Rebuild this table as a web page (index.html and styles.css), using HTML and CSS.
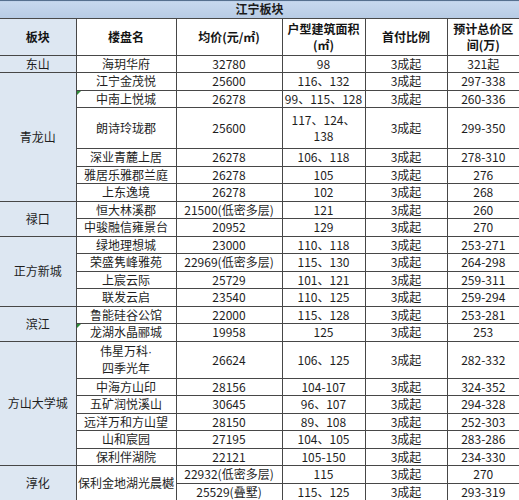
FILE: index.html
```html
<!DOCTYPE html>
<html lang="zh-CN">
<head>
<meta charset="utf-8">
<title>江宁板块</title>
<link rel="stylesheet" href="styles.css">
</head>
<body>
<table class="sheet">
  <colgroup>
    <col class="c1"><col class="c2"><col class="c3"><col class="c4"><col class="c5"><col class="c6">
  </colgroup>
  <thead>
    <tr class="r-title"><th class="title" colspan="6">江宁板块</th></tr>
    <tr class="r-head">
      <th class="blk">板块</th>
      <th>楼盘名</th>
      <th>均价(元/㎡)</th>
      <th>户型建筑面积<br>(㎡)</th>
      <th>首付比例</th>
      <th>预计总价区<br>间(万)</th>
    </tr>
  </thead>
  <tbody>
    <tr class="r"><td class="blk">东山</td><td>海玥华府</td><td>32780</td><td>98</td><td>3成起</td><td>321起</td></tr>

    <tr class="r"><td class="blk" rowspan="6">青龙山</td><td>江宁金茂悦</td><td>25600</td><td>116、132</td><td>3成起</td><td>297-338</td></tr>
    <tr class="r"><td class="err">中南上悦城</td><td>26278</td><td>99、115、128</td><td>3成起</td><td>260-336</td></tr>
    <tr class="r-d1"><td>朗诗玲珑郡</td><td>25600</td><td>117、124、<br>138</td><td>3成起</td><td>299-350</td></tr>
    <tr class="r"><td>深业青麓上居</td><td>26278</td><td>106、118</td><td>3成起</td><td>278-310</td></tr>
    <tr class="r"><td>雅居乐雅郡兰庭</td><td>26278</td><td>105</td><td>3成起</td><td>276</td></tr>
    <tr class="r"><td>上东逸境</td><td>26278</td><td>102</td><td>3成起</td><td>268</td></tr>

    <tr class="r"><td class="blk" rowspan="2">禄口</td><td>恒大林溪郡</td><td>21500(低密多层)</td><td>121</td><td>3成起</td><td>260</td></tr>
    <tr class="r"><td>中骏融信雍景台</td><td>20952</td><td>129</td><td>3成起</td><td>270</td></tr>

    <tr class="r"><td class="blk" rowspan="4">正方新城</td><td>绿地理想城</td><td>23000</td><td>110、118</td><td>3成起</td><td>253-271</td></tr>
    <tr class="r"><td>荣盛隽峰雅苑</td><td>22969(低密多层)</td><td>115、130</td><td>3成起</td><td>264-298</td></tr>
    <tr class="r"><td>上宸云际</td><td>25729</td><td>101、121</td><td>3成起</td><td>259-311</td></tr>
    <tr class="r"><td>联发云启</td><td>23540</td><td>110、125</td><td>3成起</td><td>259-294</td></tr>

    <tr class="r"><td class="blk" rowspan="2">滨江</td><td>鲁能硅谷公馆</td><td>22000</td><td>115、128</td><td>3成起</td><td>253-281</td></tr>
    <tr class="r"><td class="err">龙湖水晶郦城</td><td>19958</td><td>125</td><td>3成起</td><td>253</td></tr>

    <tr class="r-d2"><td class="blk" rowspan="6">方山大学城</td><td>伟星万科<span class="dot">·</span><br>四季光年</td><td>26624</td><td>106、125</td><td>3成起</td><td>282-332</td></tr>
    <tr class="r"><td>中海方山印</td><td>28156</td><td>104-107</td><td>3成起</td><td>324-352</td></tr>
    <tr class="r"><td>五矿润悦溪山</td><td>30645</td><td>96、107</td><td>3成起</td><td>294-328</td></tr>
    <tr class="r"><td>远洋万和方山望</td><td>28150</td><td>89、108</td><td>3成起</td><td>252-303</td></tr>
    <tr class="r"><td>山和宸园</td><td>27195</td><td>104、105</td><td>3成起</td><td>283-286</td></tr>
    <tr class="r"><td>保利伴湖院</td><td>22121</td><td>105-150</td><td>3成起</td><td>234-330</td></tr>

    <tr class="r"><td class="blk" rowspan="2">淳化</td><td rowspan="2">保利金地湖光晨樾</td><td>22932(低密多层)</td><td>115</td><td>3成起</td><td>270</td></tr>
    <tr class="r"><td>25529(叠墅)</td><td>115、125</td><td>3成起</td><td>293-319</td></tr>
  </tbody>
</table>
</body>
</html>
```

FILE: styles.css
```css
html, body {
  margin: 0;
  padding: 0;
  background: #ffffff;
}

.sheet {
  width: 519px;
  table-layout: fixed;
  border-collapse: collapse;
  font-family: "Noto Sans CJK SC", "Noto Sans", sans-serif;
  font-size: 12px;
  line-height: 16px;
  color: #1e1e1e;
}

.c1 { width: 76px; }
.c2 { width: 100px; }
.c3 { width: 106px; }
.c4 { width: 83px; }
.c5 { width: 82px; }
.c6 { width: 72px; }

.sheet th,
.sheet td {
  padding: 0;
  text-align: center;
  vertical-align: middle;
  border: 1px solid #474747;
  white-space: nowrap;
  overflow: visible;
}

.sheet th {
  font-weight: bold;
  color: #141414;
}

.sheet td:last-child,
.sheet th:last-child {
  border-right: 0;
}

.sheet .blk {
  border-left: 0;
  background: #dde7f2;
}

.sheet .title {
  border-left: 0;
  border-right: 0;
  border-top: 1px solid #56708f;
  border-bottom: 1px solid #4a4a4a;
  background: linear-gradient(#c7d8ee, #b7cbe4);
  color: #1b1b1b;
}

.r-title { height: 17.5px; }
.r-head { height: 37px; }
.r { height: 17.5px; }
.r-d1 { height: 41px; }
.r-d2 { height: 37px; }

.dot {
  font-family: "Liberation Sans", sans-serif;
}

.err {
  position: relative;
}

.err::before {
  content: "";
  position: absolute;
  left: 0;
  top: 0;
  width: 0;
  height: 0;
  border-top: 4px solid #2e8b3a;
  border-right: 4px solid transparent;
}
```
